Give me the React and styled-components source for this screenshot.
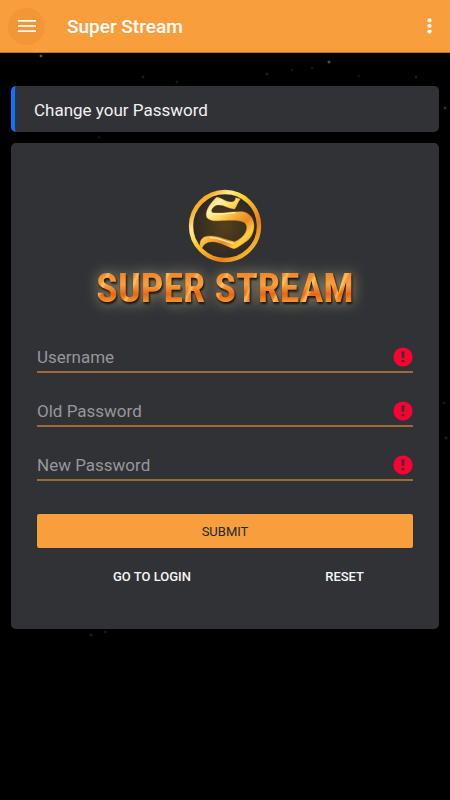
import React from 'react'
import styled, { createGlobalStyle } from 'styled-components';

const fields = [
    { id: 'username', label: 'Username', type: 'text' },
    { id: 'old-password', label: 'Old Password', type: 'password' },
    { id: 'new-password', label: 'New Password', type: 'password' },
];

function MenuIcon() {
    return (
        <svg width="18" height="12" viewBox="0 0 18 12" fill="#fff" aria-hidden="true">
            <rect y="0" width="18" height="1.7" />
            <rect y="5.1" width="18" height="1.7" />
            <rect y="10.3" width="18" height="1.7" />
        </svg>
    )
}

function MoreIcon() {
    return (
        <svg width="5" height="16" viewBox="0 0 5 16" fill="#fff" aria-hidden="true">
            <circle cx="2.5" cy="2.4" r="2.1" />
            <circle cx="2.5" cy="8" r="2.1" />
            <circle cx="2.5" cy="13.6" r="2.1" />
        </svg>
    )
}

function ErrorIcon() {
    return (
        <svg width="20" height="20" viewBox="0 0 20 20" aria-hidden="true">
            <circle cx="10" cy="10" r="9.6" fill="#ff0033" />
            <path d="M8.4 4.6h3.2l-.4 6.4H8.8zM8.6 13h2.8v2.3H8.6z" fill="#38303a" />
        </svg>
    )
}

function Emblem() {
    return (
        <svg width="74" height="74" viewBox="25 27 222 222" aria-hidden="true">
            <defs>
                <linearGradient id="ring" x1="0" y1="0" x2="1" y2="1">
                    <stop offset="0" stopColor="#f7a51c" />
                    <stop offset=".16" stopColor="#f6b02c" />
                    <stop offset=".28" stopColor="#ffe98a" />
                    <stop offset=".42" stopColor="#ffd22c" />
                    <stop offset=".58" stopColor="#f5a424" />
                    <stop offset=".72" stopColor="#ea7e1c" />
                    <stop offset="1" stopColor="#ffe83a" />
                </linearGradient>
                <linearGradient id="ribbon" x1="0" y1="0" x2="1" y2="1">
                    <stop offset="0" stopColor="#f7a51c" />
                    <stop offset=".22" stopColor="#fff2ac" />
                    <stop offset=".38" stopColor="#ffd65c" />
                    <stop offset=".52" stopColor="#f8ab36" />
                    <stop offset=".66" stopColor="#ec8826" />
                    <stop offset=".8" stopColor="#ffcf3c" />
                    <stop offset="1" stopColor="#f08c1c" />
                </linearGradient>
                <radialGradient id="disc">
                    <stop offset="0" stopColor="#55401a" />
                    <stop offset="1" stopColor="#2c2826" />
                </radialGradient>
            </defs>
            <circle cx="136" cy="138" r="100" fill="url(#disc)" />
            <circle cx="136" cy="138" r="102" fill="none" stroke="url(#ring)" strokeWidth="13" />
            <path
                d="M110 52C122 50 136 67 156 66C166 64 167 60 168 53L182 57C174 66 172 78 165 87C146 87 130 71 110 76C97 82 92 92 98 98C125 102 155 94 188 95C208 98 221 112 223 135C223 160 212 178 194 188C184 194 174 204 163 206C142 200 125 186 98 185C80 185 71 194 66 207C57 196 60 176 76 170C108 162 140 181 165 185C188 176 204 156 201 138C196 120 172 122 145 121C115 122 92 127 81 112C75 93 91 71 110 52Z"
                fill="url(#ribbon)"
                stroke="#f7a62c"
                strokeWidth="1"
            />
            <path d="M99 101C120 104 145 99 168 98M90 173C115 172 140 186 162 191" fill="none" stroke="#fff0a8" strokeWidth="4" />
        </svg>
    )
}

export default function App() {
    return (
        <>
            <GlobalStyle />
            <Header>
                <MenuButton type="button" aria-label="Open menu"><MenuIcon /></MenuButton>
                <Title>Super Stream</Title>
                <MoreButton type="button" aria-label="More options"><MoreIcon /></MoreButton>
            </Header>
            <Main>
                <Banner>Change your Password</Banner>
                <Card onSubmit={(e) => e.preventDefault()}>
                    <Logo>
                        <Emblem />
                        <Wordmark>SUPER STREAM</Wordmark>
                    </Logo>
                    <Fields>
                        {fields.map((field) => (
                            <Field key={field.id} htmlFor={field.id}>
                                <Input
                                    id={field.id}
                                    type={field.type}
                                    placeholder={field.label}
                                    aria-label={field.label}
                                />
                                <ErrorIcon />
                            </Field>
                        ))}
                    </Fields>
                    <Submit type="submit">SUBMIT</Submit>
                    <Actions>
                        <TextButton type="button">GO TO LOGIN</TextButton>
                        <TextButton type="reset">RESET</TextButton>
                    </Actions>
                </Card>
            </Main>
        </>
    )
}

const GlobalStyle = createGlobalStyle`
    * {
        box-sizing: border-box;
    }
    body {
        margin: 0;
        min-height: 100vh;
        font-family: Roboto, 'Liberation Sans', sans-serif;
        color: #f1f1f2;
        background-color: #000;
        background-repeat: no-repeat;
        /* faint stars */
        background-image:
            radial-gradient(circle at 41px 56px, #777 0, transparent 2px),
            radial-gradient(circle at 329px 62px, #777 0, transparent 2px),
            radial-gradient(circle at 143px 77px, #2c2c2c 0, transparent 2px),
            radial-gradient(circle at 177px 82px, #242424 0, transparent 2px),
            radial-gradient(circle at 267px 74px, #2c2c2c 0, transparent 2px),
            radial-gradient(circle at 292px 70px, #1c1c1c 0, transparent 2px),
            radial-gradient(circle at 312px 68px, #1c1c1c 0, transparent 2px),
            radial-gradient(circle at 359px 76px, #1c1c1c 0, transparent 2px),
            radial-gradient(circle at 416px 77px, #2c2c2c 0, transparent 2px),
            radial-gradient(circle at 445px 108px, #444 0, transparent 2px),
            radial-gradient(circle at 99px 137px, #1c1c1c 0, transparent 2px),
            radial-gradient(circle at 446px 438px, #2c2c2c 0, transparent 2px),
            radial-gradient(circle at 444px 403px, #242424 0, transparent 2px),
            radial-gradient(circle at 91px 635px, #2c2c2c 0, transparent 2px),
            radial-gradient(circle at 105px 632px, #242424 0, transparent 2px);
    }
    button, input {
        font-family: inherit;
    }
`;

const Header = styled.header`
    display: flex;
    align-items: center;
    height: 53px;
    padding: 0 8px;
    background-color: #f89e3d;
    border-bottom: 1px solid #b8752d;
`;

const IconButton = styled.button`
    display: flex;
    align-items: center;
    justify-content: center;
    height: 37px;
    padding: 0;
    border: none;
    background: none;
    cursor: pointer;
`;

const MenuButton = styled(IconButton)`
    width: 37px;
    border-radius: 50%;
    background-color: #f29637;
`;

const MoreButton = styled(IconButton)`
    width: 25px;
    margin-left: auto;
`;

const Title = styled.h1`
    margin: 0 0 0 22px;
    padding-top: 2px;
    font-size: 19px;
    line-height: 22px;
    font-weight: 500;
    color: #fff;
`;

const Main = styled.main`
    display: flex;
    flex-direction: column;
    gap: 11px;
    padding: 33px 11px 11px;
`;

const Banner = styled.h2`
    margin: 0;
    padding: 13px 19px 11px;
    border-left: 4px solid #0d72ff;
    border-radius: 5px;
    background-color: #313236;
    font-size: 17px;
    line-height: 22px;
    font-weight: 400;
`;

const Card = styled.form`
    display: flex;
    flex-direction: column;
    padding: 46px 26px 36px;
    border-radius: 5px;
    background-color: #313236;
`;

const Logo = styled.div`
    display: flex;
    flex-direction: column;
    align-items: center;
`;

const Wordmark = styled.div`
    margin-top: 4px;
    font-family: 'Liberation Sans Narrow', 'Roboto Condensed', 'Liberation Sans', sans-serif;
    font-size: 40px;
    line-height: 44px;
    font-weight: 700;
    white-space: nowrap;
    color: transparent;
    background-image:
        repeating-linear-gradient(115deg, transparent 0 11px, #ffe27a99 14px, transparent 17px 27px),
        linear-gradient(180deg, #f5872a 16%, #f9a03c 40%, #ea6616 62%, #fba02c 84%);
    background-clip: text;
    filter: drop-shadow(1px 2px 1px #17130f) drop-shadow(0 0 7px #8f8c6c);
`;

const Fields = styled.div`
    display: flex;
    flex-direction: column;
    gap: 16px;
    margin-top: 24px;
`;

const Field = styled.label`
    display: flex;
    align-items: center;
    height: 38px;
    padding-top: 8px;
    border-bottom: 2px solid #9c6b38;
`;

const Input = styled.input`
    flex: 1;
    min-width: 0;
    height: 28px;
    padding: 0;
    border: none;
    outline: none;
    background: none;
    color: #f1f1f2;
    font-size: 17px;
    line-height: 22px;
    &::placeholder {
        color: #96979a;
        opacity: 1;
    }
`;

const Submit = styled.button`
    height: 34px;
    margin-top: 33px;
    padding: 0;
    border: none;
    border-radius: 2px;
    background-color: #f89e3d;
    box-shadow: 0 0 1px #06202c;
    color: #25282c;
    font-size: 13px;
    cursor: pointer;
`;

const Actions = styled.div`
    display: flex;
    justify-content: space-between;
    margin-top: 11px;
    padding: 0 49px 0 76px;
`;

const TextButton = styled.button`
    height: 34px;
    padding: 0;
    border: none;
    background: none;
    color: #f6f6f8;
    font-size: 13px;
    font-weight: 500;
    cursor: pointer;
`;
